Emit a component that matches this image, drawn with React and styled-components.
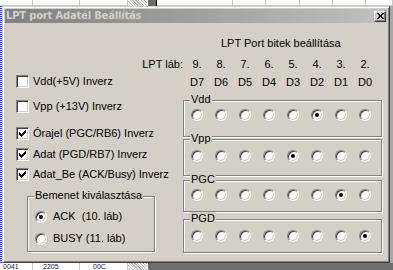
import React from 'react';
import styled, { createGlobalStyle } from 'styled-components';

const Global = createGlobalStyle`
  html, body { margin: 0; padding: 0; background: #fff; }
  body {
    width: 393px; height: 270px; overflow: hidden;
    font-family: "Liberation Sans", Arial, sans-serif;
  }
`;

const Desktop = styled.div`
  width: 393px;
  height: 270px;
  display: flex;
  flex-direction: column;
  overflow: hidden;
  background: #fff;
`;

const SheetStrip = styled.div`
  flex: none;
  height: ${(p) => p.$h}px;
  display: flex;
  overflow: hidden;
`;

const SheetCell = styled.div`
  flex: none;
  width: ${(p) => p.$w}px;
  height: 100%;
  box-sizing: border-box;
  background: ${(p) => p.$bg || '#fff'};
  border-right: 1px solid ${(p) => p.$line || '#c8c8c8'};
  border-bottom: ${(p) => (p.$under ? '1px solid #c8c8c8' : 'none')};
  font-size: 7px;
  line-height: 7px;
  color: #101040;
  padding-left: ${(p) => p.$pl || 0}px;
  white-space: nowrap;
`;

const Hatch = styled(SheetCell)`
  background: repeating-linear-gradient(45deg, #fff 0 1px, #b8b8b8 1px 2px);
`;

const MiddleRow = styled.div`
  flex: none;
  height: 257px;
  display: flex;
`;

const LeftEdge = styled.div`
  flex: none;
  width: 2px;
  background: repeating-linear-gradient(180deg, #2040c0 0 1px, #fff 1px 2px);
`;

const RightEdge = styled.div`
  flex: none;
  width: 3px;
  background: #a8a8a8;
`;

const Window = styled.div`
  flex: none;
  width: 388px;
  height: 257px;
  box-sizing: border-box;
  background: #d4d0c8;
  border: 1px solid;
  border-color: #d4d0c8 #404040 #404040 #d4d0c8;
  box-shadow: inset 1px 1px 0 #fff, inset -1px -1px 0 #808080;
  padding: 2px;
  display: flex;
  flex-direction: column;
`;

const TitleBar = styled.div`
  flex: none;
  height: 14px;
  display: flex;
  align-items: center;
  justify-content: space-between;
  background: linear-gradient(90deg, #808080 0%, #c0c0c0 100%);
  padding-left: 1px;
`;

const TitleText = styled.span`
  font-family: "DejaVu Sans", Verdana, sans-serif;
  font-weight: bold;
  font-size: 10px;
  letter-spacing: -0.2px;
  line-height: 14px;
  color: #d4d0c8;
  white-space: nowrap;
`;

const CloseButton = styled.span`
  flex: none;
  width: 12px;
  height: 11px;
  margin-right: 1px;
  box-sizing: border-box;
  background: #d4d0c8;
  border: 1px solid;
  border-color: #fff #404040 #404040 #fff;
  box-shadow: inset -1px -1px 0 #808080;
  display: flex;
  align-items: center;
  justify-content: center;
`;

const Body = styled.div`
  flex: 1;
  display: flex;
  font-size: 11px;
  line-height: 13px;
  color: #000;
`;

const LeftCol = styled.div`
  flex: none;
  width: 135px;
  box-sizing: border-box;
  padding: 52px 0 0 11px;
  display: flex;
  flex-direction: column;
  align-items: flex-start;
`;

const RightCol = styled.div`
  flex: 1;
  padding-top: 14px;
  display: flex;
  flex-direction: column;
  align-items: flex-start;
`;

const Header = styled.div`
  height: 13px;
  padding-left: 81px;
  white-space: nowrap;
`;

const PinRow = styled.div`
  display: flex;
  height: 13px;
  margin-top: ${(p) => p.$mt}px;
`;

const PinHead = styled.span`
  flex: none;
  width: 45px;
  box-sizing: border-box;
  padding-right: 2px;
  text-align: right;
  white-space: nowrap;
`;

const PinCell = styled.span`
  flex: none;
  width: 24px;
  text-align: center;
  white-space: nowrap;
`;

const Group = styled.div`
  position: relative;
  flex: none;
  box-sizing: border-box;
  width: ${(p) => p.$w}px;
  height: ${(p) => p.$h}px;
  margin-top: ${(p) => p.$mt}px;
  margin-left: ${(p) => p.$ml}px;
  border: 1px solid #808080;
  box-shadow: inset 1px 1px 0 #fff, 1px 1px 0 #fff;
  padding: ${(p) => p.$pt}px 0 0 ${(p) => p.$pl}px;
`;

const Caption = styled.span`
  position: absolute;
  top: -8px;
  left: ${(p) => p.$left}px;
  padding: 0 1px;
  background: #d4d0c8;
  white-space: nowrap;
`;

const RadioRow = styled.div`
  display: flex;
`;

const RadioCell = styled.span`
  flex: none;
  width: 24px;
  display: flex;
  justify-content: center;
`;

const RadioDot = styled.span`
  position: relative;
  flex: none;
  display: inline-block;
  width: 12px;
  height: 12px;
  box-sizing: border-box;
  border-radius: 50%;
  background: #fff;
  border: 1px solid;
  border-color: #808080 #fff #fff #808080;
  box-shadow: inset 1px 1px 0 #404040, inset -1px -1px 0 #d4d0c8;
  &::after {
    content: '';
    display: ${(p) => (p.$checked ? 'block' : 'none')};
    position: absolute;
    left: 3px;
    top: 3px;
    width: 4px;
    height: 4px;
    border-radius: 50%;
    background: #000;
  }
`;

const OptionRow = styled.div`
  display: flex;
  align-items: center;
  height: 13px;
  margin-top: ${(p) => p.$mt || 0}px;
  gap: ${(p) => p.$gap}px;
  white-space: pre;
`;

const CheckBox = styled.span`
  flex: none;
  width: 13px;
  height: 13px;
  box-sizing: border-box;
  background: #fff;
  border: 1px solid;
  border-color: #808080 #fff #fff #808080;
  box-shadow: inset 1px 1px 0 #404040, inset -1px -1px 0 #d4d0c8;
  display: flex;
  align-items: center;
  justify-content: center;
`;

const CheckMark = () => (
  <svg width="7" height="7" viewBox="0 0 7 7" shapeRendering="crispEdges">
    {[2, 3, 4, 3, 2, 1, 0].map((y, x) => (
      <rect key={x} x={x} y={y} width="1" height="3" fill="#000" />
    ))}
  </svg>
);

const CloseGlyph = () => (
  <svg width="7" height="6" viewBox="0 0 7 6" shapeRendering="crispEdges">
    {[
      [0, 0], [1, 0], [5, 0], [6, 0],
      [1, 1], [2, 1], [4, 1], [5, 1],
      [2, 2], [3, 2], [4, 2],
      [2, 3], [3, 3], [4, 3],
      [1, 4], [2, 4], [4, 4], [5, 4],
      [0, 5], [1, 5], [5, 5], [6, 5],
    ].map(([x, y]) => (
      <rect key={`${x}-${y}`} x={x} y={y} width="1" height="1" fill="#000" />
    ))}
  </svg>
);

const pins = ['9.', '8.', '7.', '6.', '5.', '4.', '3.', '2.'];
const bits = ['D7', 'D6', 'D5', 'D4', 'D3', 'D2', 'D1', 'D0'];

const checks = [
  { label: 'Vdd(+5V) Inverz', checked: false, mt: 0 },
  { label: 'Vpp (+13V) Inverz', checked: false, mt: 12 },
  { label: 'Órajel (PGC/RB6) Inverz', checked: true, mt: 14 },
  { label: 'Adat (PGD/RB7) Inverz', checked: true, mt: 8 },
  { label: 'Adat_Be (ACK/Busy) Inverz', checked: true, mt: 7 },
];

const lines = [
  { name: 'Vdd', sel: 5, h: 37, mt: 11, pt: 8 },
  { name: 'Vpp', sel: 4, h: 37, mt: 2, pt: 10 },
  { name: 'PGC', sel: 6, h: 32, mt: 4, pt: 8 },
  { name: 'PGD', sel: 7, h: 34, mt: 7, pt: 10 },
];

export default function App() {
  return (
    <>
      <Global />
      <Desktop>
        <SheetStrip $h={6}>
          <SheetCell $w={33} $under />
          <SheetCell $w={47} $under />
          <SheetCell $w={48} $under />
          <Hatch $w={20} $line="#fff" />
          <SheetCell $w={9} $bg="#6a6a6a" $line="#000" />
          <SheetCell $w={76} $under />
          <SheetCell $w={33} $under />
          <SheetCell $w={34} $under />
          <SheetCell $w={33} $under />
          <SheetCell $w={33} $under />
          <SheetCell $w={27} $under />
        </SheetStrip>
        <MiddleRow>
          <LeftEdge />
          <Window>
            <TitleBar>
              <TitleText>LPT port Adatél Beállítás</TitleText>
              <CloseButton>
                <CloseGlyph />
              </CloseButton>
            </TitleBar>
            <Body>
              <LeftCol>
                {checks.map((c) => (
                  <OptionRow key={c.label} $mt={c.mt} $gap={4}>
                    <CheckBox>{c.checked && <CheckMark />}</CheckBox>
                    <span>{c.label}</span>
                  </OptionRow>
                ))}
                <Group $w={128} $h={56} $mt={15} $ml={11} $pt={13} $pl={7}>
                  <Caption $left={6}>Bemenet kiválasztása</Caption>
                  <OptionRow $gap={6}>
                    <RadioDot $checked />
                    <span>ACK  (10. láb)</span>
                  </OptionRow>
                  <OptionRow $gap={6} $mt={9}>
                    <RadioDot />
                    <span>BUSY (11. láb)</span>
                  </OptionRow>
                </Group>
              </LeftCol>
              <RightCol>
                <Header>LPT Port bitek beállítása</Header>
                <PinRow $mt={8}>
                  <PinHead>LPT láb:</PinHead>
                  {pins.map((p) => (
                    <PinCell key={p}>{p}</PinCell>
                  ))}
                </PinRow>
                <PinRow $mt={5}>
                  <PinHead />
                  {bits.map((b) => (
                    <PinCell key={b}>{b}</PinCell>
                  ))}
                </PinRow>
                {lines.map((l) => (
                  <Group key={l.name} $w={199} $h={l.h} $mt={l.mt} $ml={43} $pt={l.pt} $pl={1}>
                    <Caption $left={6}>{l.name}</Caption>
                    <RadioRow>
                      {bits.map((b, i) => (
                        <RadioCell key={b}>
                          <RadioDot $checked={i === l.sel} />
                        </RadioCell>
                      ))}
                    </RadioRow>
                  </Group>
                ))}
              </RightCol>
            </Body>
          </Window>
          <RightEdge />
        </MiddleRow>
        <SheetStrip $h={7}>
          <SheetCell $w={33} $pl={3}>0041</SheetCell>
          <SheetCell $w={47} $pl={10}>2205</SheetCell>
          <SheetCell $w={48} $pl={13}>00C</SheetCell>
          <Hatch $w={20} $line="#fff" />
          <SheetCell $w={245} $bg="#6e6e6e" $line="#6e6e6e" />
        </SheetStrip>
      </Desktop>
    </>
  );
}
